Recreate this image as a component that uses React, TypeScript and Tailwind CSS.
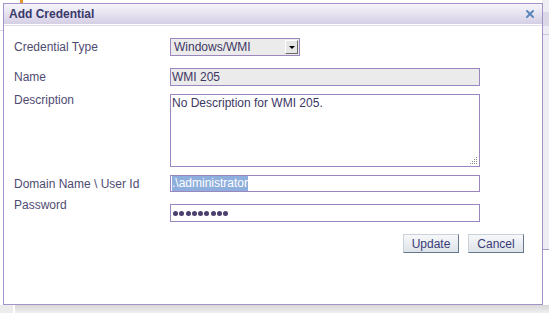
import { X } from "lucide-react"

const FONT = { fontFamily: '"Liberation Sans", Arial, sans-serif' }

function Label({ children, className = "" }: { children: React.ReactNode; className?: string }) {
  return <div className={`w-[156px] shrink-0 text-[12px] leading-[14px] text-[#4f4b72] ${className}`}>{children}</div>
}

function Row({ children, className = "" }: { children: React.ReactNode; className?: string }) {
  return <div className={`flex ${className}`}>{children}</div>
}

export default function App() {
  return (
    <div className="relative h-[313px] w-[549px] overflow-hidden bg-white" style={FONT}>
      {/* page behind the dialog */}
      <div className="absolute left-0 top-[30px] h-px w-[4px] bg-[#d9d5e6]" />
      <div className="absolute left-[20px] top-0 h-[3px] w-[3px] bg-[#e8902c]" />
      <div className="absolute right-0 top-0 h-[250px] w-[7px] bg-[#eeedf3]">
        <div className="mt-[12px] h-[14px] bg-[#dcd8e8]" />
        <div className="mt-[8px] h-px bg-[#cdc6de]" />
      </div>
      <div className="absolute right-0 top-[249px] h-px w-[7px] bg-[#a998c9]" />
      <div className="absolute left-0 top-[305px] h-[8px] w-[13px] bg-[#ececec]" />
      <div className="absolute left-[15px] top-[305px] h-[8px] w-[534px] bg-gradient-to-b from-[#d8d8d8] to-[#efefef]" />

      {/* dialog */}
      <div className="absolute left-[3px] top-[3px] flex h-[302px] w-[540px] flex-col border border-[#a393c6] bg-white">
        <div className="flex h-[21px] items-center justify-between border-b border-white bg-gradient-to-b from-[#f6f5fa] to-[#d5cfe5] pl-[5px] pr-[6px]">
          <span className="text-[12px] font-bold text-[#3a396c]">Add Credential</span>
          <X className="h-[12px] w-[12px] text-[#5a86bb]" strokeWidth={4} />
        </div>
        <div className="h-px bg-[#e4e0ee]" />

        <div className="flex flex-col pl-[10px] pt-[12px]">
          <Row className="h-[18px] items-center">
            <Label>Credential Type</Label>
            <div className="flex h-[18px] w-[130px] items-center justify-between border border-[#9a87bf] bg-[#ecebeb] pl-[3px] pr-[1px]">
              <span className="text-[12px] text-[#3c3763]">Windows/WMI</span>
              <div className="flex h-[14px] w-[13px] items-center justify-center border border-b-[#6b6b6b] border-l-white border-r-[#6b6b6b] border-t-white bg-[#e6e6e6]">
                <div className="h-0 w-0 border-x-[3px] border-t-[3px] border-x-transparent border-t-black" />
              </div>
            </div>
          </Row>

          <Row className="mt-[12px] h-[18px] items-center">
            <Label>Name</Label>
            <div className="flex h-[18px] w-[310px] items-center border border-[#9a87bf] bg-[#ecebeb] pl-[1px] text-[12px] text-[#3c3763]">
              WMI 205
            </div>
          </Row>

          <Row className="mt-[8px]">
            <Label className="mt-[-1px]">Description</Label>
            <div className="relative h-[73px] w-[310px] border border-[#9a87bf] bg-white pl-[1px] pt-px text-[12px] leading-[14px] text-[#3c3763]">
              No Description for WMI 205.
              <svg className="absolute bottom-[1px] right-[1px]" width="8" height="8" viewBox="0 0 8 8">
                {[
                  [6, 0], [6, 2], [4, 2], [6, 4], [4, 4], [2, 4], [6, 6], [4, 6], [2, 6], [0, 6],
                ].map(([x, y]) => (
                  <rect key={`${x}-${y}`} x={x} y={y} width="1" height="1" fill="#8a8a8a" />
                ))}
              </svg>
            </div>
          </Row>

          <Row className="mt-[8px] h-[17px] items-center">
            <Label>Domain Name \ User Id</Label>
            <div className="flex h-[17px] w-[310px] items-center border border-[#9a87bf] bg-white pl-[1px]">
              <span className="bg-[#8eaedd] text-[12px] leading-[15px] text-white">.\administrator</span>
            </div>
          </Row>

          <Row className="mt-[12px]">
            <Label className="mt-[-6px]">Password</Label>
            <div className="flex h-[18px] w-[310px] items-center gap-[1.3px] border border-[#9a87bf] bg-white pl-[2px]">
              {Array.from({ length: 9 }).map((_, i) => (
                <div key={i} className="h-[5px] w-[5px] rounded-full bg-[#4a3f6d]" />
              ))}
            </div>
          </Row>

          <div className="mt-[12px] flex justify-end gap-[9px] pr-[18px]">
            {["Update", "Cancel"].map((b) => (
              <button
                key={b}
                type="button"
                className="flex h-[19px] w-[56px] items-center justify-center border border-b-[#65778a] border-l-[#c9d1d9] border-r-[#65778a] border-t-[#c9d1d9] bg-gradient-to-b from-[#f7f8fa] to-[#dde3e9] text-[12px] text-[#3a3a78]"
              >
                {b}
              </button>
            ))}
          </div>
        </div>
      </div>
    </div>
  )
}
